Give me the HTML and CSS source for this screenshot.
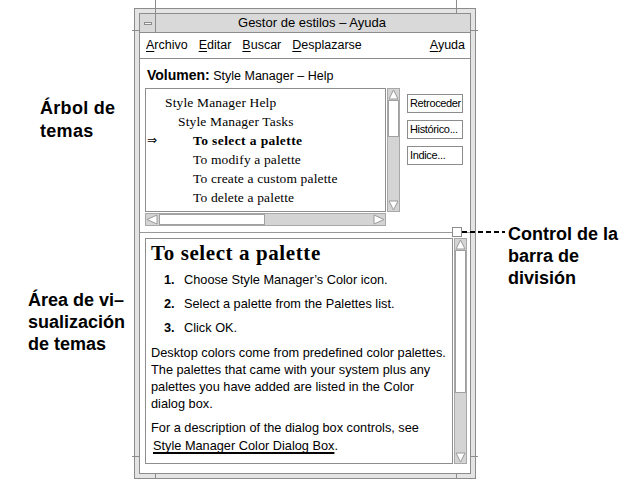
FILE: index.html
```html
<!DOCTYPE html>
<html lang="es">
<head>
<meta charset="utf-8">
<title>Gestor de estilos – Ayuda</title>
<link rel="stylesheet" href="styles.css">
</head>
<body>
<div class="page">
  <div class="left-notes">
    <p class="note note-tree">Árbol de<br>temas</p>
    <p class="note note-area">Área de vi–<br>sualización<br>de temas</p>
  </div>

  <div class="window">
    <span class="tick tick-top"></span>
    <span class="tick tick-bottom"></span>
    <span class="tick tick-side"></span>
    <div class="inner">
      <div class="titlebar">
        <div class="minbtn"><span class="mindash"></span></div>
        <div class="title">Gestor de estilos – Ayuda</div>
      </div>
      <div class="menubar">
        <span class="menu"><u>A</u>rchivo</span>
        <span class="menu"><u>E</u>ditar</span>
        <span class="menu"><u>B</u>uscar</span>
        <span class="menu"><u>D</u>esplazarse</span>
        <span class="menu help"><u>A</u>yuda</span>
      </div>
      <div class="main">
        <div class="volume"><b>Volumen:</b> Style Manager – Help</div>
        <div class="upper">
          <div class="tree-col">
            <div class="tree">
              <div class="row l1"><span class="mark"></span><span class="txt">Style Manager Help</span></div>
              <div class="row l2"><span class="mark"></span><span class="txt">Style Manager Tasks</span></div>
              <div class="row l3 cur"><span class="mark">⇒</span><span class="txt">To select a palette</span></div>
              <div class="row l3"><span class="mark"></span><span class="txt">To modify a palette</span></div>
              <div class="row l3"><span class="mark"></span><span class="txt">To create a custom palette</span></div>
              <div class="row l3"><span class="mark"></span><span class="txt">To delete a palette</span></div>
            </div>
            <div class="hscroll">
              <span class="harrow"><svg width="12" height="11" viewBox="0 0 12 11"><polygon points="1,5.5 11,1 11,10" fill="#fff" stroke="#9a9a9a"/></svg></span>
              <span class="hthumb"></span>
              <span class="htrack"></span>
              <span class="harrow"><svg width="12" height="11" viewBox="0 0 12 11"><polygon points="11,5.5 1,1 1,10" fill="#fff" stroke="#9a9a9a"/></svg></span>
            </div>
          </div>
          <div class="vscroll vs-tree">
            <span class="varrow"><svg width="11" height="11" viewBox="0 0 11 11"><polygon points="5.5,1 10,10 1,10" fill="#fff" stroke="#9a9a9a"/></svg></span>
            <span class="vthumb thumb-tree"></span>
            <span class="vtrack"></span>
            <span class="varrow"><svg width="11" height="11" viewBox="0 0 11 11"><polygon points="5.5,10 10,1 1,1" fill="#fff" stroke="#9a9a9a"/></svg></span>
          </div>
          <div class="buttons">
            <button class="btn">Retroceder</button>
            <button class="btn">Histórico...</button>
            <button class="btn">Indice...</button>
          </div>
        </div>

        <div class="sashrow">
          <span class="sline"></span>
          <span class="sash"></span>
          <span class="sline send"></span>
        </div>

        <div class="lower">
          <div class="display">
            <h1 class="topic">To select a palette</h1>
            <ol class="steps">
              <li><span class="num">1.</span>Choose Style Manager’s Color icon.</li>
              <li><span class="num">2.</span>Select a palette from the Palettes list.</li>
              <li><span class="num">3.</span>Click OK.</li>
            </ol>
            <p class="para">Desktop colors come from predefined color palettes.<br>The palettes that came with your system plus any<br>palettes you have added are listed in the Color<br>dialog box.</p>
            <p class="para para2">For a description of the dialog box controls, see<br><a class="link">Style Manager Color Dialog Box</a>.</p>
          </div>
          <div class="vscroll vs-display">
            <span class="varrow"><svg width="11" height="11" viewBox="0 0 11 11"><polygon points="5.5,1 10,10 1,10" fill="#fff" stroke="#9a9a9a"/></svg></span>
            <span class="vthumb thumb-display"></span>
            <span class="vtrack"></span>
            <span class="varrow"><svg width="11" height="11" viewBox="0 0 11 11"><polygon points="5.5,10 10,1 1,1" fill="#fff" stroke="#9a9a9a"/></svg></span>
          </div>
        </div>
      </div>
    </div>
  </div>

  <div class="right-notes">
    <p class="note note-sash">Control de la<br>barra de<br>división</p>
  </div>
  <span class="leader"></span>
</div>
</body>
</html>
```

FILE: styles.css
```css
* { box-sizing: border-box; }
html, body { margin: 0; padding: 0; background: #fff; }
body { font-family: "Liberation Sans", Arial, sans-serif; color: #000; }

.page {
  position: relative;
  width: 643px;
  height: 491px;
  display: flex;
  overflow: hidden;
}

/* annotations */
.left-notes { width: 134px; flex: none; }
.right-notes { flex: 1; }
.note {
  margin: 0;
  font-weight: bold;
  font-size: 18px;
  line-height: 22px;
}
.note-tree { margin: 97px 0 0 40px; line-height: 23px; letter-spacing: 0.3px; }
.note-area { margin: 146px 0 0 28px; }
.note-sash { margin: 223px 0 0 32px; }

.leader {
  position: absolute;
  left: 462px;
  top: 231px;
  width: 43px;
  height: 2px;
  background: repeating-linear-gradient(to right, #000 0 5px, transparent 5px 8px);
}

/* window frame */
.window {
  position: relative;
  flex: none;
  width: 342px;
  height: 471px;
  margin-top: 8px;
  border: 1px solid #8c8c8c;
  background: #e4e4e4;
  padding: 4px;
}
.tick { position: absolute; }
.tick-top {
  top: -9px; left: 20px; width: 302px; height: 13px;
  border-left: 1px solid #8c8c8c; border-right: 1px solid #8c8c8c;
}
.tick-bottom {
  bottom: -1px; left: 20px; width: 302px; height: 5px;
  border-left: 1px solid #8c8c8c; border-right: 1px solid #8c8c8c;
}
.tick-side {
  top: 21px; left: -3px; width: 346px; height: 427px;
  border-top: 1px solid #8c8c8c; border-bottom: 1px solid #8c8c8c;
  clip-path: polygon(0 0, 7px 0, 7px 100%, 0 100%, 0 0, 100% 0, 100% 100%, calc(100% - 7px) 100%, calc(100% - 7px) 0);
}
.inner {
  position: relative;
  height: 100%;
  border: 1px solid #8c8c8c;
  background: #fff;
  display: flex;
  flex-direction: column;
}

.titlebar {
  height: 19px;
  flex: none;
  display: flex;
  background: #d9d9d9;
  border-bottom: 1px solid #8c8c8c;
}
.minbtn {
  width: 16px;
  border-right: 1px solid #8c8c8c;
  display: flex;
  align-items: center;
  justify-content: center;
}
.mindash {
  width: 8px; height: 3px;
  border: 1px solid #8c8c8c;
  background: #f2f2f2;
}
.title {
  flex: 1;
  text-align: center;
  font-size: 13px;
  line-height: 18px;
  padding-right: 2px;
}

.menubar {
  height: 26px;
  flex: none;
  display: flex;
  align-items: center;
  padding: 0 5px 1px 6px;
  border-bottom: 1px solid #8c8c8c;
  font-size: 12.5px;
  gap: 11px;
}
.menu u {
  text-decoration-thickness: 1px;
  text-underline-offset: 2px;
  text-decoration-skip-ink: none;
}
.help { margin-left: auto; }

.main { flex: 1; display: flex; flex-direction: column; }

.volume {
  padding: 8px 0 0 7px;
  height: 29px;
  line-height: 16px;
  font-size: 12.5px;
  white-space: nowrap;
}
.volume b { font-size: 14px; }

.upper { display: flex; padding-left: 5px; height: 138px; flex: none; }
.tree-col { width: 241px; flex: none; }
.tree {
  height: 124px;
  border: 1px solid #8e8e8e;
  padding: 4px 0 0 1px;
  font-family: "Liberation Serif", "Times New Roman", serif;
  font-size: 13.5px;
  line-height: 19px;
  letter-spacing: 0.15px;
  white-space: nowrap;
  overflow: hidden;
}
.row { display: flex; }
.mark {
  width: 18px; flex: none;
  font-family: "DejaVu Sans", sans-serif;
  font-size: 12px;
  line-height: 19px;
}
.l2 .txt { padding-left: 13px; }
.l3 .txt { padding-left: 28px; }
.cur .txt { font-weight: bold; letter-spacing: 0.4px; }

/* scrollbars */
.hscroll {
  margin-top: 1px;
  height: 13px;
  border: 1px solid #a8a8a8;
  background: #d4d4d4;
  display: flex;
  align-items: stretch;
}
.harrow { width: 12px; flex: none; display: flex; align-items: center; }
.harrow svg { display: block; }
.hthumb { width: 106px; background: #fff; border: 1px solid #a0a0a0; margin-left: 1px; }
.htrack { flex: 1; }

.vscroll {
  width: 13px;
  flex: none;
  border: 1px solid #a8a8a8;
  background: #d4d4d4;
  display: flex;
  flex-direction: column;
}
.varrow { height: 11px; flex: none; display: flex; justify-content: center; }
.varrow svg { display: block; }
.vthumb { background: #fff; border: 1px solid #a0a0a0; flex: none; }
.vtrack { flex: 1; }
.vs-tree { height: 124px; margin-left: 1px; }
.thumb-tree { height: 37px; }
.vs-display { height: 226px; margin-left: 1px; }
.thumb-display { height: 143px; }

.buttons {
  margin: 6px 0 0 7px;
  width: 56px;
  display: flex;
  flex-direction: column;
  gap: 7px;
}
.btn {
  height: 19px;
  border: 1px solid #8c8c8c;
  background: #fff;
  font-family: "Liberation Sans", Arial, sans-serif;
  font-size: 11px;
  letter-spacing: -0.35px;
  color: #000;
  text-align: left;
  padding: 0 0 0 2px;
  line-height: 17px;
  white-space: nowrap;
  overflow: hidden;
}

/* sash */
.sashrow {
  margin-top: 1px;
  height: 10px;
  display: flex;
  align-items: center;
  flex: none;
}
.sline { flex: 1; height: 1px; background: #999; }
.sline.send { flex: none; width: 8px; }
.sash { width: 10px; height: 10px; border: 1px solid #8c8c8c; background: #fff; }

/* lower display */
.lower { display: flex; padding-left: 5px; margin-top: 1px; height: 226px; flex: none; }
.display {
  width: 308px;
  height: 226px;
  border: 1px solid #8e8e8e;
  padding: 2px 5px 0 5px;
  overflow: hidden;
  font-size: 12.75px;
}
.topic {
  margin: 0;
  font-family: "Liberation Serif", "Times New Roman", serif;
  font-weight: bold;
  font-size: 21px;
  line-height: 24px;
  letter-spacing: 0.6px;
}
.steps {
  list-style: none;
  margin: 3px 0 0 0;
  padding: 0;
}
.steps li { display: flex; line-height: 24px; white-space: nowrap; }
.num { width: 20px; margin-left: 13px; font-weight: bold; flex: none; }
.para { margin: 4px 0 0 0; line-height: 17px; white-space: nowrap; }
.para2 { margin-top: 7px; line-height: 18px; }
.link {
  margin-left: 2px;
  color: #000;
  text-decoration: underline;
  text-decoration-thickness: 2px;
  text-underline-offset: 2px;
  text-decoration-skip-ink: none;
}
```
